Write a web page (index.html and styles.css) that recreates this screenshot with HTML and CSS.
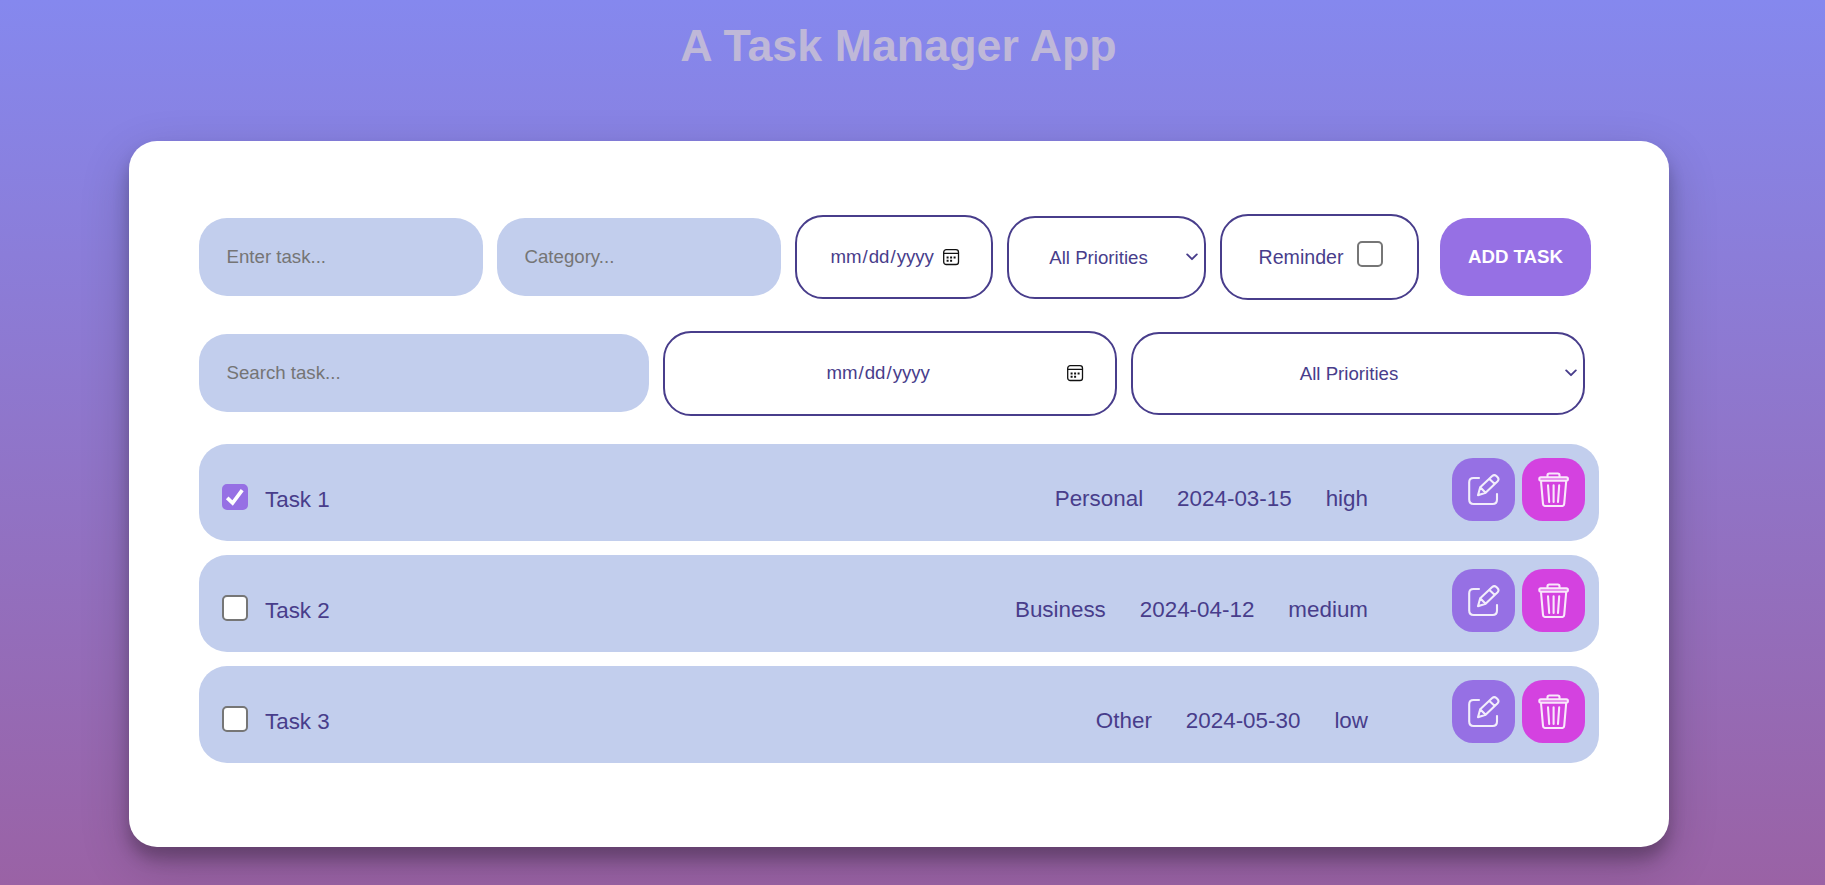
FILE: index.html
```html
<!DOCTYPE html>
<html lang="en">
<head>
<meta charset="utf-8">
<title>A Task Manager App</title>
<link rel="stylesheet" href="styles.css">
</head>
<body>
<svg class="sprite" aria-hidden="true">
  <symbol id="edit" viewBox="0 0 35 35">
    <path d="M13 6H7.5Q3.2 6 3.2 10.3V27.5Q3.2 32 7.7 32H26.6Q31 32 31 27.5V22"/>
    <path d="M12 23.2L14.2 15.2L26.2 4Q28.3 2.2 30.4 4L31.6 5.2Q33.4 7.2 31.6 9.2L19.6 20.8ZM14.2 15.2L19.6 20.8M23.2 6.8L28.8 12"/>
  </symbol>
  <symbol id="trash" viewBox="0 0 35 35">
    <path d="M11.5 4.8V3.2Q11.5 1.5 13.2 1.5H21.8Q23.5 1.5 23.5 3.2V4.8M4.8 5.4H30.4Q31.9 5.4 31.9 7Q31.9 8.6 30.4 8.6H4.8Q3.3 8.6 3.3 7Q3.3 5.4 4.8 5.4ZM5 9L7 31.8Q7.2 34 9.3 34H26Q28 34 28.2 31.8L30.2 9M12 13.2L13.2 30M17.6 13.2V30M23.2 13.2L22 30"/>
  </symbol>
</svg>
<h1 class="title">A Task Manager App</h1>
<main class="card">
  <form class="row add-row">
    <input class="field" type="text" placeholder="Enter task...">
    <input class="field" type="text" placeholder="Category...">
    <input class="outlined date" type="date">
    <select class="outlined select"><option>All Priorities</option></select>
    <label class="outlined reminder">Reminder <input class="check" type="checkbox"></label>
    <button class="add" type="button">ADD TASK</button>
  </form>
  <div class="row search-row">
    <input class="field" type="text" placeholder="Search task...">
    <input class="outlined date" type="date">
    <select class="outlined select"><option>All Priorities</option></select>
  </div>
  <ul class="tasks">
    <li class="task">
      <input class="check" type="checkbox" checked><span class="name">Task 1</span>
      <span class="meta"><span>Personal</span><span>2024-03-15</span><span>high</span></span>
      <span class="actions"><button class="icon edit"><svg><use href="#edit"/></svg></button><button class="icon trash"><svg><use href="#trash"/></svg></button></span>
    </li>
    <li class="task">
      <input class="check" type="checkbox"><span class="name">Task 2</span>
      <span class="meta"><span>Business</span><span>2024-04-12</span><span>medium</span></span>
      <span class="actions"><button class="icon edit"><svg><use href="#edit"/></svg></button><button class="icon trash"><svg><use href="#trash"/></svg></button></span>
    </li>
    <li class="task">
      <input class="check" type="checkbox"><span class="name">Task 3</span>
      <span class="meta"><span>Other</span><span>2024-05-30</span><span>low</span></span>
      <span class="actions"><button class="icon edit"><svg><use href="#edit"/></svg></button><button class="icon trash"><svg><use href="#trash"/></svg></button></span>
    </li>
  </ul>
</main>
</body>
</html>
```
FILE: styles.css
```css
* { box-sizing: border-box; margin: 0; padding: 0; }
html { height: 100%; }
body {
  height: 885px;
  overflow: hidden;
  font-family: Arial, "Liberation Sans", sans-serif;
  color: #483d8b;
  background: linear-gradient(#8588ee, #9a62a5);
}
.sprite { display: none; }
.title {
  padding-top: 20px;
  width: 1797px;
  height: 141px;
  font-size: 44.8px;
  line-height: 51px;
  text-align: center;
  color: #bfb8d8;
}
.card {
  width: 1540px;
  height: 706px;
  margin-left: 129px;
  padding: 70px;
  border-radius: 28px;
  background: #fff;
  box-shadow: 0 12px 16px rgba(0, 0, 0, .24), 0 17px 50px rgba(0, 0, 0, .19);
}
.row { display: flex; align-items: center; gap: 14px; }
.add-row { height: 92px; }
.search-row { height: 86px; margin-top: 27px; }
.field, .outlined, .add { font-family: inherit; font-size: 18.667px; border-radius: 28px; }
.field { width: 284px; height: 78px; padding: 0 27.5px; border: 0; background: #c2ceed; }
.field::placeholder { color: #757575; }
.outlined { width: 199px; border: 2px solid #483d8b; background: #fff; color: #483d8b; text-align: center; }
.date { width: 198px; height: 84px; padding: 0 31px 0 26px; }
.date::-webkit-calendar-picker-indicator {
  padding: 0;
  background: url("data:image/svg+xml,%3Csvg xmlns='http://www.w3.org/2000/svg' viewBox='0 0 18 18'%3E%3Crect x='1.7' y='1.7' width='14.8' height='14.8' rx='2.6' fill='none' stroke='%23111' stroke-width='1.3'/%3E%3Cpath d='M1.7 5.3h14.8' stroke='%23111' stroke-width='1.3'/%3E%3Cpath d='M4.6 8.4h2v2h-2zM8.1 8.4h2v2h-2zM11.6 8.4h2v2h-2zM4.6 11.7h2v2h-2zM8.1 11.7h2v2h-2z' fill='%23111'/%3E%3C/svg%3E") center / 18px 18px no-repeat;
}
.select {
  appearance: none;
  height: 83px;
  padding-right: 16px;
  background: #fff url("data:image/svg+xml,%3Csvg xmlns='http://www.w3.org/2000/svg' width='12' height='8'%3E%3Cpath d='M1.2 1.4L6 6.2L10.8 1.4' fill='none' stroke='%23483d8b' stroke-width='1.9' stroke-linecap='round' stroke-linejoin='round'/%3E%3C/svg%3E") right 6px center no-repeat;
}
.search-row .select { padding-right: 18px; }
.reminder { display: flex; align-items: center; justify-content: center; gap: 14px; height: 86px; padding-left: 3px; font-size: 19.6px; }
.check { appearance: none; width: 26px; height: 26px; border: 2px solid #767676; border-radius: 5px; background: #fff; }
.check:checked {
  border-color: #9670e4;
  background: #9670e4 url("data:image/svg+xml,%3Csvg xmlns='http://www.w3.org/2000/svg' width='22' height='22'%3E%3Cpath d='M3.2 11.8L8.6 17L18.2 4.2' fill='none' stroke='%23fff' stroke-width='3.7'/%3E%3C/svg%3E") center no-repeat;
}
.reminder .check { margin-top: -6px; }
.add { width: 151px; height: 78px; margin-left: 7px; border: 0; background: #9670e4; color: #fff; font-weight: 700; }
.search-row .field { width: 450px; }
.search-row .outlined { width: 454px; }
.search-row .date { height: 85px; }
.tasks { display: grid; gap: 14px; margin-top: 28px; list-style: none; }
.task {
  display: flex;
  align-items: center;
  height: 97px;
  padding: 0 14px 0 23px;
  border-radius: 28px;
  background: #c2ceed;
  font-size: 22.4px;
}
.task .check { margin-top: 8px; }
.name { margin: 14px 0 0 17px; }
.meta { display: flex; gap: 34px; margin: 12px 84px 0 auto; }
.actions { display: flex; gap: 7px; margin-bottom: 6px; }
.icon { display: grid; place-items: center; width: 63px; height: 63px; border: 0; border-radius: 21px; }
.icon svg { width: 35px; height: 35px; fill: none; stroke: #fff; stroke-width: 2.1; stroke-linejoin: round; stroke-linecap: round; opacity: .88; }
.edit { background: #9670e4; }
.trash { background: #d442e0; }
```
